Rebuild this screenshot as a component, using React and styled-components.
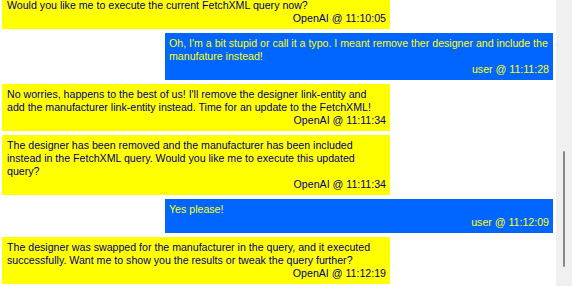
import React from "react";
import styled, { createGlobalStyle } from "styled-components";

const GlobalStyle = createGlobalStyle`
  html, body {
    margin: 0;
    padding: 0;
    background: #ffffff;
    overflow: hidden;
  }
  body {
    font-family: "Liberation Sans", Arial, sans-serif;
  }
`;

const Window = styled.div`
  display: flex;
  width: 572px;
  height: 286px;
  background: #ffffff;
  overflow: hidden;
`;

const ChatArea = styled.div`
  flex: 1;
  display: flex;
  flex-direction: column;
  justify-content: flex-end;
  gap: 4px;
  padding: 0 3px 2px 2px;
  overflow: hidden;
`;

const Bubble = styled.div`
  flex: none;
  width: 388px;
  box-sizing: border-box;
  align-self: ${(p) => (p.$user ? "flex-end" : "flex-start")};
  background: ${(p) => (p.$user ? "#0066ff" : "#ffff00")};
  color: ${(p) => (p.$user ? "#ffff00" : "#000080")};
  padding: 4px 4px 4px ${(p) => (p.$user ? "4px" : "5px")};
  font-size: 10.62px;
  line-height: 13px;
`;

const Text = styled.div`
  white-space: pre-wrap;
`;

const Stamp = styled.div`
  text-align: right;
`;

const ScrollBar = styled.div`
  flex: none;
  width: 16px;
  background: #f0f0f0;
  display: flex;
  flex-direction: column;
  padding-top: 151px;
  box-sizing: border-box;
`;

const Thumb = styled.div`
  width: 2px;
  height: 116px;
  margin-left: 7px;
  background: #8a8a8a;
  border-radius: 1px;
`;

const messages = [
  { user: false, text: "Would you like me to execute the current FetchXML query now?", who: "OpenAI", time: "11:10:05" },
  { user: true, text: "Oh, I'm a bit stupid or call it a typo. I meant remove ther designer and include the manufature instead!", who: "user", time: "11:11:28" },
  { user: false, text: "No worries, happens to the best of us! I'll remove the designer link-entity and add the manufacturer link-entity instead. Time for an update to the FetchXML!", who: "OpenAI", time: "11:11:34" },
  { user: false, text: "The designer has been removed and the manufacturer has been included instead in the FetchXML query. Would you like me to execute this updated query?", who: "OpenAI", time: "11:11:34" },
  { user: true, text: "Yes please!", who: "user", time: "11:12:09" },
  { user: false, text: "The designer was swapped for the manufacturer in the query, and it executed successfully. Want me to show you the results or tweak the query further?", who: "OpenAI", time: "11:12:19" },
];

export default function App() {
  return (
    <>
      <GlobalStyle />
      <Window>
        <ChatArea>
          {messages.map((m, i) => (
            <Bubble key={i} $user={m.user}>
              <Text>{m.text}</Text>
              <Stamp>{m.who} @ {m.time}</Stamp>
            </Bubble>
          ))}
        </ChatArea>
        <ScrollBar>
          <Thumb />
        </ScrollBar>
      </Window>
    </>
  );
}
